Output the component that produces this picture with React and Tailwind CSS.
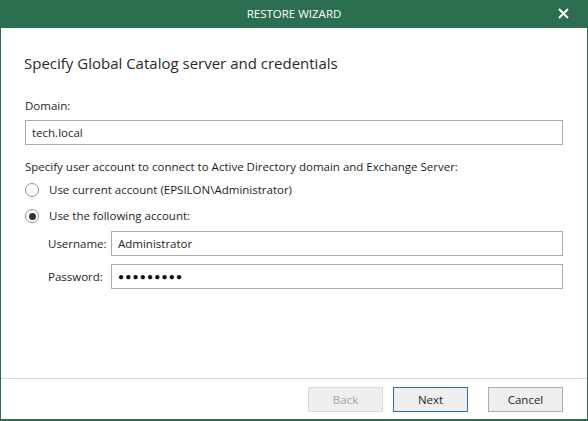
import React, { useState } from 'react';

const font = { fontFamily: '"Open Sans", "Noto Sans", sans-serif' };

const Radio = ({ checked, label, onClick }) => (
  <div onClick={onClick} className="flex items-center gap-[10px] h-[16px] cursor-default">
    <span className="w-[14px] h-[14px] rounded-full border border-[#8f8f8f] bg-white flex items-center justify-center shrink-0">
      {checked && <span className="w-[7px] h-[7px] rounded-full bg-[#333333]" />}
    </span>
    <span className="text-[11.5px] leading-[16px] text-[#1e1e1e]">{label}</span>
  </div>
);

const Field = ({ children }) => (
  <div className="flex-1 h-[25px] border border-[#ababab] bg-white flex items-center px-[6px] text-[11.5px] text-[#1e1e1e]">
    {children}
  </div>
);

const Btn = ({ label, variant }) => {
  const styles = {
    disabled: 'bg-[#efefef] border-[#dadada] text-[#a3a3a3]',
    primary: 'bg-[#efefef] border-[#2a6fb4] text-[#1e1e1e]',
    normal: 'bg-[#efefef] border-[#adadad] text-[#1e1e1e]',
  };
  return (
    <button className={`w-[75px] h-[25px] border text-[11.5px] flex items-center justify-center ${styles[variant]}`}>
      {label}
    </button>
  );
};

export default function App() {
  const [useCurrent, setUseCurrent] = useState(false);

  return (
    <div style={font} className="w-[588px] h-[421px] flex flex-col bg-white overflow-hidden">
      {/* title bar */}
      <div className="h-[28px] shrink-0 bg-[#2b6e50] relative flex items-center justify-center">
        <span className="text-white text-[11.5px] leading-none">RESTORE WIZARD</span>
        <svg className="absolute right-[19px] top-[8px]" width="11" height="11" viewBox="0 0 11 11">
          <path d="M1 1 L10 10 M10 1 L1 10" stroke="white" strokeWidth="2" />
        </svg>
      </div>

      <div className="flex-1 flex flex-col border-x border-b-2 border-[#2b6e50]">
        <div className="flex-1 flex flex-col pl-[22px] pr-[24px] pt-[25px]">
          <h1 className="text-[15px] leading-[20px] text-[#2a2a2a] pl-[1px]">
            Specify Global Catalog server and credentials
          </h1>

          <div className="mt-[25px] text-[11.5px] leading-[16px] text-[#1e1e1e] pl-[2px]">Domain:</div>
          <div className="mt-[6px] ml-[2px] flex">
            <Field>tech.local</Field>
          </div>

          <div className="mt-[14px] text-[11.5px] leading-[16px] text-[#1e1e1e] pl-[2px]">
            Specify user account to connect to Active Directory domain and Exchange Server:
          </div>

          <div className="mt-[7px] pl-[2px]">
            <Radio checked={useCurrent} onClick={() => setUseCurrent(true)} label="Use current account (EPSILON\Administrator)" />
          </div>
          <div className="mt-[10px] pl-[2px]">
            <Radio checked={!useCurrent} onClick={() => setUseCurrent(false)} label="Use the following account:" />
          </div>

          <div className="mt-[7px] pl-[25px] flex items-center">
            <span className="w-[63px] text-[11.5px] text-[#1e1e1e]">Username:</span>
            <Field>Administrator</Field>
          </div>
          <div className="mt-[8px] pl-[25px] flex items-center">
            <span className="w-[63px] text-[11.5px] text-[#1e1e1e]">Password:</span>
            <Field>
              <span className="text-[10px] tracking-[1.2px] text-[#111111]">●●●●●●●●●</span>
            </Field>
          </div>
        </div>

        {/* footer */}
        <div className="h-[41px] shrink-0 border-t border-[#d9d9d9] flex items-start justify-end pt-[8px] pr-[24px]">
          <Btn label="Back" variant="disabled" />
          <div className="ml-[10px]"><Btn label="Next" variant="primary" /></div>
          <div className="ml-[20px]"><Btn label="Cancel" variant="normal" /></div>
        </div>
      </div>
    </div>
  );
}
